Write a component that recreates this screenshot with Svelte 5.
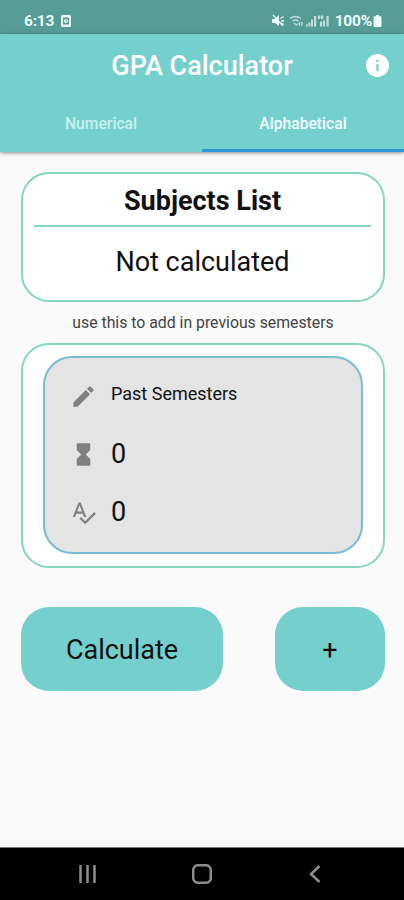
<script lang="ts">
	const tabs = ['Numerical', 'Alphabetical'];
	let active = $state('Alphabetical');

	const pencil = 'M3 17.25V21h3.75L17.81 9.94l-3.75-3.75L3 17.25zM20.71 7.04a1 1 0 0 0 0-1.41l-2.34-2.34a1 1 0 0 0-1.41 0l-1.83 1.83 3.75 3.75 1.83-1.83z';
	const hourglass = 'M6 2v6h.01L6 8.01 10 12l-4 4 .01.01H6V22h12v-5.99h-.01L18 16l-4-4 4-3.99-.01-.01H18V2H6z';
	const spellcheck = 'M12.45 16h2.09L9.43 3H7.57L2.46 16h2.09l1.12-3h5.64l1.14 3zm-6.02-5L8.5 5.48 10.57 11H6.43zm15.16.59l-8.09 8.09L9.83 16l-1.41 1.41 5.09 5.09L23 13l-1.41-1.41z';

	const fields = [
		{ icon: pencil, text: 'Past Semesters', label: true },
		{ icon: hourglass, text: '0', label: false },
		{ icon: spellcheck, text: '0', label: false }
	];
</script>

<div class="screen">
	<div class="status">
		<span class="clock">6:13</span>
		<svg class="app-icon" viewBox="0 0 10 12" aria-hidden="true">
			<path fill-rule="evenodd" d="M1.5 0h7A1.5 1.5 0 0 1 10 1.5v9A1.5 1.5 0 0 1 8.5 12h-7A1.5 1.5 0 0 1 0 10.5v-9A1.5 1.5 0 0 1 1.5 0zM2 2.5v7h6v-7z" />
			<circle cx="5" cy="6" r="2.1" />
			<path class="hand" d="M5 4.6V6h1.2" />
		</svg>
		<svg class="signals" viewBox="0 0 60 14" aria-hidden="true">
			<path d="M0 5h3l4-4v11L3 9H0z" />
			<path class="line" d="M1 1l10 11M8.5 4.5l3-2M9 7h3M9 9l3 1.5" />
			<g opacity=".72">
				<path class="line" d="M18 4.5q5.5-4 11 0M20.5 7q3-2 6 0M22 9l2.5 2 1.5-1.5M27.5 8v4M30 12V8" />
				<path d="M34 12.5v-2h1.8v2zM36.5 12.5v-4h1.8v4zM39 12.5v-7h2v7zM42 12.5V2h2.2v10.5z" />
				<path d="M46 1.5h2.2V5H46zM49 1.5h2.2V5H49zM48 12.5v-5h2v5zM51 12.5v-6h2v6zM54.5 12.5V2h2.2v10.5z" />
			</g>
		</svg>
		<span class="percent">100%</span>
		<svg class="battery" viewBox="0 0 8 12" aria-hidden="true">
			<path d="M2.5 0h3v1.3H7a1 1 0 0 1 1 1V11a1 1 0 0 1-1 1H1a1 1 0 0 1-1-1V2.3a1 1 0 0 1 1-1h1.5z" />
		</svg>
	</div>

	<header>
		<div class="title-bar">
			<h1>GPA Calculator</h1>
			<button class="info" aria-label="About">
				<svg viewBox="2 2 20 20"><path d="M12 2C6.48 2 2 6.48 2 12s4.48 10 10 10 10-4.48 10-10S17.52 2 12 2zm1 15h-2v-6h2v6zm0-8h-2V7h2v2z" /></svg>
			</button>
		</div>
		<nav class="tabs">
			{#each tabs as tab (tab)}
				<button class:active={active === tab} onclick={() => (active = tab)}>{tab}</button>
			{/each}
		</nav>
	</header>

	<main>
		<section class="card subjects">
			<h2>Subjects List</h2>
			<p>Not calculated</p>
		</section>

		<p class="hint">use this to add in previous semesters</p>

		<section class="card past">
			<div class="panel">
				{#each fields as field}
					<div class="field" class:label={field.label}>
						<svg viewBox="0 0 24 24" aria-hidden="true"><path d={field.icon} /></svg>
						<span>{field.text}</span>
					</div>
				{/each}
			</div>
		</section>

		<div class="actions">
			<button class="calculate">Calculate</button>
			<button class="add">+</button>
		</div>
	</main>

	<footer>
		<svg viewBox="0 0 18 18" aria-hidden="true"><path d="M1.5 0v18M8.5 0v18M15.5 0v18" /></svg>
		<svg class="home" viewBox="0 0 20 20" aria-hidden="true"><rect x="1.2" y="1.2" width="17.6" height="17.6" rx="5" /></svg>
		<svg class="back" viewBox="0 0 12 18" aria-hidden="true"><path d="M10.5 1L2 9l8.5 8" /></svg>
	</footer>
</div>

<style>
	:global(body) { margin: 0; background: #fafafa; }
	.screen { display: flex; flex-direction: column; width: 404px; height: 900px; overflow: hidden; background: #fafafa; color: #111; font-family: Roboto, sans-serif; }
	button { padding: 0; border: 0; background: none; color: inherit; font: inherit; }
	h1, h2, p { margin: 0; }

	.status { display: flex; flex: none; align-items: center; box-sizing: border-box; height: 34px; padding: 8px 22px 0 24px; background: #579b97; color: #e9fbfa; font-weight: 700; }
	.status svg { fill: currentColor; }
	.clock { width: 37px; font-size: 15.5px; line-height: 26px; letter-spacing: -.2px; }
	.app-icon { width: 10px; height: 12px; }
	.app-icon .hand { fill: none; stroke: #579b97; stroke-width: .8; }
	.signals { width: 60px; height: 14px; margin-left: auto; }
	.line { fill: none; stroke: currentColor; stroke-width: 1.3; }
	.percent { margin-left: 3px; font-size: 15.5px; letter-spacing: -.2px; }
	.battery { width: 9px; height: 12px; margin-left: 1px; }

	header { z-index: 1; flex: none; height: 118px; background: #75d0cd; color: #fff; box-shadow: 0 1px 4px rgba(0, 0, 0, .45); }
	.title-bar { display: grid; grid-template-columns: 54px 1fr 54px; align-items: center; height: 63px; }
	h1 { grid-column: 2; text-align: center; font-size: 27px; font-weight: 500; }
	.info { justify-self: center; width: 23px; height: 23px; }
	.info svg { display: block; fill: #fff; }
	.tabs { display: grid; grid-template-columns: 1fr 1fr; height: 55px; }
	.tabs button { padding-top: 1px; border-bottom: 3px solid transparent; color: #c7f0ee; font-size: 15.7px; font-weight: 500; }
	.tabs .active { border-color: #2c98d8; color: #f3ffff; }

	main { flex: 1; padding: 20px 19px 0 21px; }
	.card { box-sizing: border-box; border: 2px solid #86d7ba; border-radius: 28px; background: #fff; }
	.subjects { height: 130px; padding: 0 12px 0 11px; text-align: center; }
	h2 { height: 51px; border-bottom: 2px solid #86d7ba; font-size: 27px; font-weight: 700; line-height: 54px; }
	.subjects p { font-size: 27px; line-height: 70px; }
	.hint { height: 41px; color: #444; text-align: center; font-size: 15.8px; line-height: 42px; }
	.past { height: 225px; padding: 11px 20px; }
	.panel { display: flex; flex-direction: column; box-sizing: border-box; height: 198px; padding: 9px 25px; border: 2px solid #78bdd5; border-radius: 29px; background: #e4e4e4; }
	.field { display: flex; align-items: center; gap: 14px; height: 58px; font-size: 27px; }
	.field svg { width: 27px; height: 27px; fill: #808080; }
	.label { font-size: 18px; }
	.label span { padding-bottom: 5px; }

	.actions { display: flex; justify-content: space-between; margin-top: 39px; }
	.actions button { height: 84px; padding-top: 1px; border-radius: 28px; background: #75d0cd; font-size: 27px; }
	.calculate { width: 202px; }
	.add { width: 110px; }

	footer { display: flex; flex: none; align-items: center; justify-content: space-between; box-sizing: border-box; height: 53px; padding: 0 83px 0 79px; border-top: 1px solid #777; background: #000; }
	footer svg { width: 18px; height: 18px; fill: none; stroke: #8d8d8d; stroke-width: 2.5; }
	footer .home { width: 20px; height: 20px; margin-right: 3px; }
	footer .back { width: 12px; }
</style>
